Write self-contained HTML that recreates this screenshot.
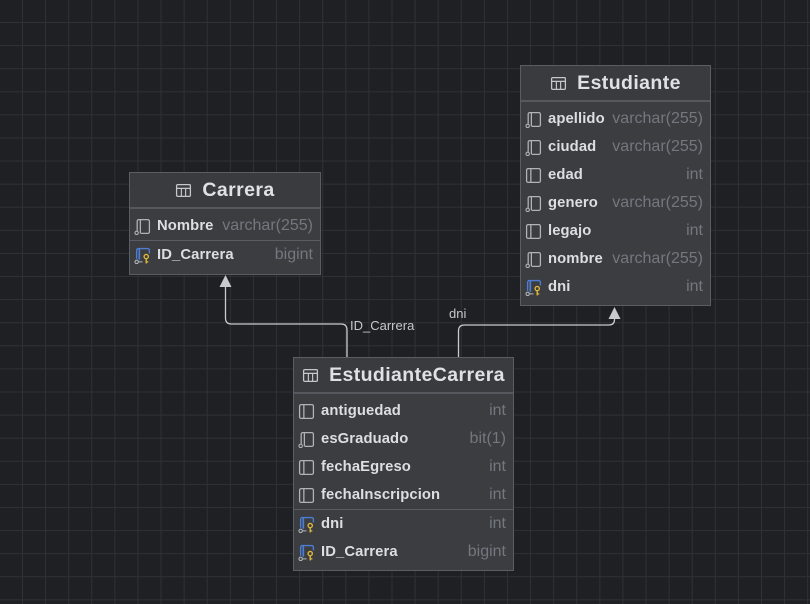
<!DOCTYPE html>
<html><head><meta charset="utf-8"><style>
html,body{margin:0;padding:0}
body{width:810px;height:604px;overflow:hidden;position:relative;font-family:"Liberation Sans",sans-serif;
background-color:#1f2024;
background-image:linear-gradient(to right,#2f3135 1px,transparent 1px),linear-gradient(to bottom,#2f3135 1px,transparent 1px);
background-size:23.1px 23.1px;background-position:22px 22px;}
.t{position:absolute;background:#3b3d41;border:1px solid #5a5d63;box-sizing:border-box}
.h{height:34px;background:#393b3f;border-bottom:2px solid #55585e;display:flex;align-items:center;justify-content:center;color:#dfe1e5;font-size:19.5px;font-weight:bold;letter-spacing:.4px}
.h svg{margin-right:10px}
.r{position:relative;height:28px;display:flex;align-items:center;font-size:14.8px;font-weight:bold;color:#dcdee2;letter-spacing:.1px}
.r svg{margin:0 6px 0 4px;flex:none}
.r .ty{position:absolute;right:7px;color:#73777e;font-weight:normal;font-size:16px;letter-spacing:0}
.sep{border-top:1px solid #5a5d63}
.lbl{position:absolute;color:#c4c7cc;font-size:13px}
</style></head><body>
<svg width="0" height="0" style="position:absolute">
<defs>
<symbol id="c" viewBox="0 0 16 16"><rect x="1.5" y="1.5" width="13" height="13" rx="1.5" fill="none" stroke="#b0b3b8" stroke-width="1.2"/><line x1="5.5" y1="1.5" x2="5.5" y2="14.5" stroke="#b0b3b8" stroke-width="1.2"/></symbol>
<symbol id="n" viewBox="0 0 16 16"><path d="M3 12V3a1.5 1.5 0 0 1 1.5-1.5h8.5a1.5 1.5 0 0 1 1.5 1.5v10a1.5 1.5 0 0 1-1.5 1.5H6.5" fill="none" stroke="#b0b3b8" stroke-width="1.2"/><line x1="6" y1="1.5" x2="6" y2="14.5" stroke="#b0b3b8" stroke-width="1.2"/><circle cx="2.5" cy="14" r="1.6" fill="none" stroke="#b0b3b8" stroke-width="1"/></symbol>
<symbol id="k" viewBox="0 0 16 16"><path d="M2.5 11V3a1.5 1.5 0 0 1 1.5-1.5h9a1.5 1.5 0 0 1 1.5 1.5v3" fill="none" stroke="#4d7ed4" stroke-width="1.3"/><line x1="5" y1="1.5" x2="5" y2="12" stroke="#4d7ed4" stroke-width="1.6"/><circle cx="2.5" cy="14" r="1.6" fill="none" stroke="#b0b3b8" stroke-width="1"/><line x1="4" y1="14" x2="8" y2="14" stroke="#b0b3b8" stroke-width="1"/><circle cx="11.5" cy="9" r="2" fill="none" stroke="#e0b83a" stroke-width="1.3"/><line x1="11.5" y1="11" x2="11.5" y2="15.5" stroke="#e0b83a" stroke-width="1.3"/><line x1="11.5" y1="14" x2="13.5" y2="14" stroke="#e0b83a" stroke-width="1.2"/></symbol>
<symbol id="tb" viewBox="0 0 16 16"><rect x="1.5" y="2.5" width="13" height="11" rx="1" fill="none" stroke="#c4c7cc" stroke-width="1.2"/><line x1="1.5" y1="6" x2="14.5" y2="6" stroke="#c4c7cc" stroke-width="1.2"/><line x1="6" y1="6" x2="6" y2="13.5" stroke="#c4c7cc" stroke-width="1.1"/><line x1="10" y1="6" x2="10" y2="13.5" stroke="#c4c7cc" stroke-width="1.1"/></symbol>
</defs></svg>

<svg width="810" height="604" style="position:absolute;left:0;top:0">
<path d="M225.5 285V318q0 6 6 6H341q6 0 6 6V357" fill="none" stroke="#c8cacd" stroke-width="1.3"/>
<polygon points="225.5,275 219.5,287 231.5,287" fill="#c8cacd"/>
<path d="M458.5 357V331q0-6 6-6H609q5.5 0 5.5-5.5V318" fill="none" stroke="#c8cacd" stroke-width="1.3"/>
<polygon points="614.5,307 608.5,319 620.5,319" fill="#c8cacd"/>
</svg>
<div class="lbl" style="left:350px;top:318px">ID_Carrera</div>
<div class="lbl" style="left:449px;top:306px">dni</div>

<div class="t" style="left:520px;top:65px;width:191px;height:241px">
<div class="h"><svg width="17" height="17"><use href="#tb"/></svg>Estudiante</div>
<div style="height:3px"></div>
<div class="r"><svg width="17" height="17"><use href="#n"/></svg>apellido<span class="ty">varchar(255)</span></div>
<div class="r"><svg width="17" height="17"><use href="#n"/></svg>ciudad<span class="ty">varchar(255)</span></div>
<div class="r"><svg width="17" height="17"><use href="#c"/></svg>edad<span class="ty">int</span></div>
<div class="r"><svg width="17" height="17"><use href="#n"/></svg>genero<span class="ty">varchar(255)</span></div>
<div class="r"><svg width="17" height="17"><use href="#c"/></svg>legajo<span class="ty">int</span></div>
<div class="r"><svg width="17" height="17"><use href="#n"/></svg>nombre<span class="ty">varchar(255)</span></div>
<div class="r"><svg width="17" height="17"><use href="#k"/></svg>dni<span class="ty">int</span></div>
</div>

<div class="t" style="left:129px;top:172px;width:192px;height:103px">
<div class="h"><svg width="17" height="17"><use href="#tb"/></svg>Carrera</div>
<div style="height:3px"></div>
<div class="r"><svg width="17" height="17"><use href="#n"/></svg>Nombre<span class="ty">varchar(255)</span></div>
<div class="r sep"><svg width="17" height="17"><use href="#k"/></svg>ID_Carrera<span class="ty">bigint</span></div>
</div>

<div class="t" style="left:293px;top:357px;width:221px;height:214px">
<div class="h"><svg width="17" height="17"><use href="#tb"/></svg>EstudianteCarrera</div>
<div style="height:3px"></div>
<div class="r"><svg width="17" height="17"><use href="#c"/></svg>antiguedad<span class="ty">int</span></div>
<div class="r"><svg width="17" height="17"><use href="#n"/></svg>esGraduado<span class="ty">bit(1)</span></div>
<div class="r"><svg width="17" height="17"><use href="#c"/></svg>fechaEgreso<span class="ty">int</span></div>
<div class="r"><svg width="17" height="17"><use href="#c"/></svg>fechaInscripcion<span class="ty">int</span></div>
<div class="r sep"><svg width="17" height="17"><use href="#k"/></svg>dni<span class="ty">int</span></div>
<div class="r"><svg width="17" height="17"><use href="#k"/></svg>ID_Carrera<span class="ty">bigint</span></div>
</div>
</body></html>
